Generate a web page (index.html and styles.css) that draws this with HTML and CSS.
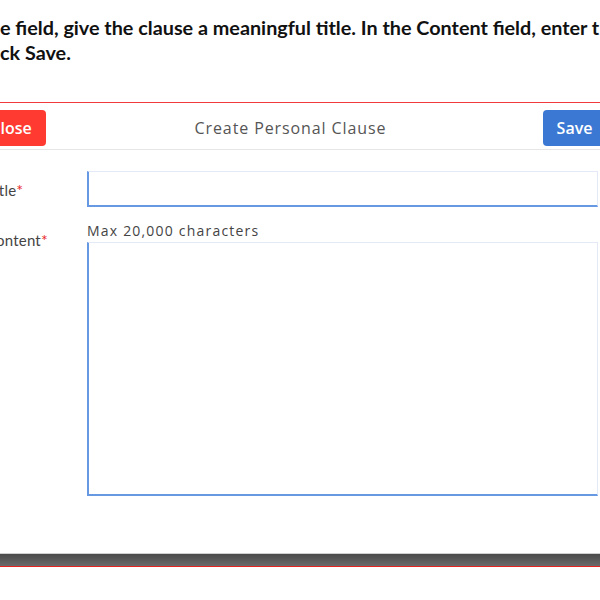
FILE: index.html
```html
<!DOCTYPE html>
<html>
<head>
<meta charset="utf-8">
<link rel="stylesheet" href="styles.css">
</head>
<body>
<div class="page">
  <p class="instr">e field, give the clause a meaningful title. In the Content field, enter t<br>ck Save.</p>
  <div class="modal">
    <div class="modal-head">
      <button class="btn btn-close">Close</button>
      <div class="modal-title">Create Personal Clause</div>
      <button class="btn btn-save">Save</button>
    </div>
    <div class="modal-body">
      <div class="row row-title">
        <label class="lbl">Title<span class="req">*</span></label>
        <div class="field"><div class="input"></div></div>
      </div>
      <div class="row row-content">
        <label class="lbl lbl-content">Content<span class="req">*</span></label>
        <div class="field">
          <div class="hint">Max 20,000 characters</div>
          <div class="input textarea"></div>
        </div>
      </div>
    </div>
  </div>
  <div class="edge"></div>
</div>
</body>
</html>
```
FILE: styles.css
```css
html, body {
  margin: 0;
  padding: 0;
  background: #fff;
  overflow: hidden;
}
.page {
  width: 600px;
  height: 600px;
  overflow: hidden;
}
.instr {
  margin: 0;
  padding-top: 15px;
  height: 102px;
  box-sizing: border-box;
  font-family: Lato, "Liberation Sans", sans-serif;
  font-weight: 700;
  font-size: 19.8px;
  line-height: 25px;
  color: #111;
  white-space: nowrap;
}
.modal {
  border-top: 1px solid #f03a3d;
  margin-left: -24px;
  margin-right: -6px;
  font-family: "Open Sans", "Noto Sans", sans-serif;
}
.modal-head {
  display: flex;
  align-items: center;
  justify-content: space-between;
  height: 47px;
  padding: 7px 0 4px;
  box-sizing: border-box;
  border-bottom: 1px solid #e6e6e6;
}
.btn {
  height: 36px;
  border: none;
  border-radius: 4px;
  color: #fff;
  font-family: "Open Sans", "Noto Sans", sans-serif;
  font-size: 16px;
  font-weight: 600;
  padding: 0;
}
.btn-close {
  background: #ff3a30;
  width: 70px;
}
.btn-save {
  background: #3a78d4;
  width: 63px;
}
.modal-title {
  font-size: 16px;
  color: #555;
  letter-spacing: 0.9px;
  margin-right: 8px;
}
.modal-body {
  padding-top: 21px;
}
.row {
  display: grid;
  grid-template-columns: 111px 511px;
}
.lbl {
  font-family: Lato, "Open Sans", sans-serif;
  font-size: 15px;
  color: #444;
  letter-spacing: 0.2px;
  padding-left: 10px;
  align-self: center;
}
.req {
  color: #e82a2a;
  font-size: 16px;
}
.input {
  height: 36px;
  box-sizing: border-box;
  border: 1px solid #e3e9f7;
  border-left: 2px solid #6799e3;
  border-bottom: 2px solid #6799e3;
  background: #fff;
}
.row-content {
  margin-top: 14px;
}
.lbl-content {
  align-self: start;
  padding-top: 9px;
}
.hint {
  font-size: 14px;
  color: #444;
  letter-spacing: 1.2px;
  line-height: 20px;
  margin-bottom: 1px;
}
.textarea {
  height: 254px;
}
.edge {
  margin-top: 57px;
  height: 12px;
  border-top: 1px solid #d0d0d0;
  border-bottom: 1.5px solid #e8231f;
  background: linear-gradient(#4a4a4a, #6a6a6a);
}
```
